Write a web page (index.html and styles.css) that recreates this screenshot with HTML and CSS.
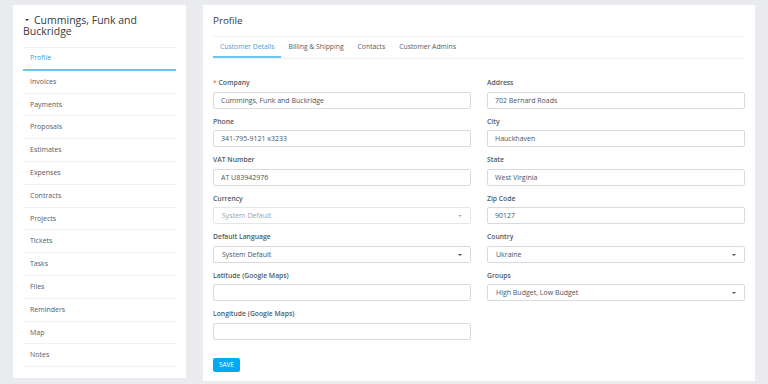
FILE: index.html
```html
<!DOCTYPE html>
<html lang="en">
<head>
  <meta charset="UTF-8" />
  <title>Customer Profile</title>
  <link rel="stylesheet" href="styles.css">
</head>
<body>
  <div class="page">
    <div class="side card">
      <h2 class="side-title"><span class="caret"></span>Cummings, Funk and Buckridge</h2>
      <ul class="side-menu">
        <li class="active">Profile</li>
        <li>Invoices</li>
        <li>Payments</li>
        <li>Proposals</li>
        <li>Estimates</li>
        <li>Expenses</li>
        <li>Contracts</li>
        <li>Projects</li>
        <li>Tickets</li>
        <li>Tasks</li>
        <li>Files</li>
        <li>Reminders</li>
        <li>Map</li>
        <li>Notes</li>
      </ul>
    </div>

    <div class="main card">
      <h1 class="main-title">Profile</h1>
      <div class="tabs">
        <span class="tab active">Customer Details</span>
        <span class="tab">Billing &amp; Shipping</span>
        <span class="tab">Contacts</span>
        <span class="tab">Customer Admins</span>
      </div>

      <form class="form">
        <div class="col">
          <div class="group">
            <label><span class="req">*</span> Company</label>
            <input type="text" value="Cummings, Funk and Buckridge" />
          </div>
          <div class="group">
            <label>Phone</label>
            <input type="text" value="341-795-9121 x3233" />
          </div>
          <div class="group">
            <label>VAT Number</label>
            <input type="text" value="AT U83942976" />
          </div>
          <div class="group">
            <label>Currency</label>
            <div class="select disabled">System Default<span class="arrow"></span></div>
          </div>
          <div class="group">
            <label>Default Language</label>
            <div class="select">System Default<span class="arrow"></span></div>
          </div>
          <div class="group">
            <label>Latitude (Google Maps)</label>
            <input type="text" value="" />
          </div>
          <div class="group">
            <label>Longitude (Google Maps)</label>
            <input type="text" value="" />
          </div>
        </div>

        <div class="col">
          <div class="group">
            <label>Address</label>
            <input type="text" value="702 Bernard Roads" />
          </div>
          <div class="group">
            <label>City</label>
            <input type="text" value="Hauckhaven" />
          </div>
          <div class="group">
            <label>State</label>
            <input type="text" value="West Virginia" />
          </div>
          <div class="group">
            <label>Zip Code</label>
            <input type="text" value="90127" />
          </div>
          <div class="group">
            <label>Country</label>
            <div class="select">Ukraine<span class="arrow"></span></div>
          </div>
          <div class="group">
            <label>Groups</label>
            <div class="select">High Budget, Low Budget<span class="arrow"></span></div>
          </div>
        </div>
      </form>

      <button class="save-btn" type="button">SAVE</button>
    </div>
  </div>
</body>
</html>
```

FILE: styles.css
```css
* {
  box-sizing: border-box;
}

body {
  margin: 0;
  background: #e9ebef;
  font-family: 'Open Sans', 'Noto Sans', sans-serif;
  color: #4a555e;
}

.page {
  display: flex;
  align-items: flex-start;
  gap: 17px;
  padding: 5px 13px;
}

.card {
  background: #fff;
}

/* left menu */
.side {
  width: 173px;
  padding: 10px 10px 11px;
}

.side-title {
  margin: 0;
  font-size: 10.5px;
  line-height: 11px;
  font-weight: 500;
  color: #333a40;
  padding-bottom: 10px;
  border-bottom: 1px solid #eef0f2;
}

.caret {
  display: inline-block;
  width: 0;
  height: 0;
  margin: 0 5px 2px 2px;
  border-left: 2px solid transparent;
  border-right: 2px solid transparent;
  border-top: 2.5px solid #333a40;
  vertical-align: middle;
}

.side-menu {
  list-style: none;
  margin: 0;
  padding: 0;
}

.side-menu li {
  padding: 0 7px;
  font-size: 7px;
  line-height: 21.8px;
  color: #525c64;
  border-bottom: 1px solid #eef0f2;
}

.side-menu li.active {
  color: #3a9fd8;
  line-height: 20.8px;
  border-bottom: 2px solid #6cc6f2;
}

/* main panel */
.main {
  width: 552px;
  padding: 10px 10px 9px;
}

.main-title {
  margin: 0;
  font-size: 9.8px;
  line-height: 11px;
  font-weight: 500;
  color: #333a40;
  padding-bottom: 10px;
  border-bottom: 1px solid #eef0f2;
}

.tabs {
  display: flex;
  height: 22px;
  border-bottom: 1px solid #eef0f2;
}

.tab {
  padding: 0 7px;
  font-size: 6.8px;
  line-height: 20px;
  color: #525c64;
}

.tab.active {
  color: #3a9fd8;
  border-bottom: 2px solid #6cc6f2;
}

.form {
  display: grid;
  grid-template-columns: 1fr 1fr;
  gap: 16px;
  padding-top: 19px;
}

.group {
  margin-bottom: 8px;
}

.group label {
  display: block;
  font-size: 6.8px;
  line-height: 9px;
  font-weight: 600;
  color: #4e5a63;
  margin-bottom: 4.5px;
}

.req {
  color: #e2574c;
  font-weight: 400;
}

.group input,
.select {
  display: block;
  width: 100%;
  height: 17px;
  margin: 0;
  padding: 0 7px;
  border: 1px solid #d5dbe1;
  border-radius: 2px;
  background: #fff;
  font-family: 'Open Sans', 'Noto Sans', sans-serif;
  font-size: 7px;
  line-height: 15px;
  color: #4a555e;
  outline: none;
}

.select {
  position: relative;
  padding-left: 8px;
}

.select .arrow {
  position: absolute;
  right: 8px;
  top: 7px;
  width: 0;
  height: 0;
  border-left: 2px solid transparent;
  border-right: 2px solid transparent;
  border-top: 2.5px solid #4a555e;
}

.select.disabled {
  color: #9aa3aa;
  border-color: #e3e7eb;
}

.select.disabled .arrow {
  border-top-color: #a8b0b6;
}

.save-btn {
  display: block;
  margin-top: 10px;
  height: 14px;
  padding: 0 6px;
  border: none;
  border-radius: 2px;
  background: #03a9f4;
  color: #fff;
  font-family: 'Open Sans', 'Noto Sans', sans-serif;
  font-size: 6.4px;
  line-height: 14px;
  cursor: pointer;
}
```
